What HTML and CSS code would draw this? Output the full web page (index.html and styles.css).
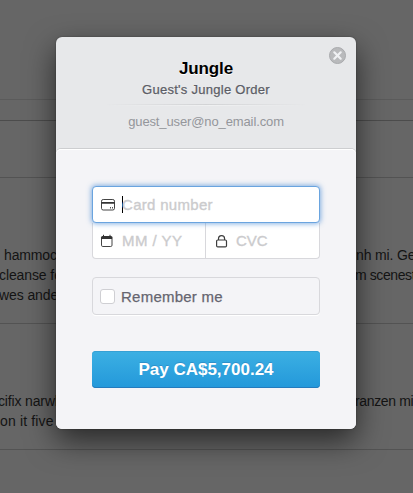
FILE: index.html
```html
<!DOCTYPE html>
<html lang="en">
<head>
<meta charset="utf-8">
<title>Jungle</title>
<link rel="stylesheet" href="styles.css">
</head>
<body>
<main class="page">
  <div class="band band-title"></div>
  <div class="band band-gap"></div>
  <div class="band band-head"></div>
  <section class="band item item-first">
    <div class="line"><span class="l1">hammoc</span><span class="r1">nh mi. Ge</span></div>
    <div class="line"><span class="l2">cleanse fe</span><span class="r2">m scenest</span></div>
    <div class="line"><span class="l2">wes ande</span><span></span></div>
  </section>
  <section class="band item item-second">
    <div class="line"><span class="l4">cifix narwh</span><span class="r4">ranzen mi</span></div>
    <div class="line"><span class="l5">on it five</span><span></span></div>
  </section>
</main>
<div class="overlay">
  <form class="modal">
    <header class="header">
      <button class="close" type="button" aria-label="Close">
        <svg width="17" height="17" viewBox="0 0 17 17"><circle cx="8.5" cy="8.5" r="8" fill="#b9babc" stroke="#a9aaad"/><path d="M5.3 5.3l6.4 6.4M11.7 5.3l-6.4 6.4" stroke="#f0f1f3" stroke-width="2.2" stroke-linecap="round"/></svg>
      </button>
      <h1>Jungle</h1>
      <h2>Guest's Jungle Order</h2>
      <div class="rule"></div>
      <p class="email">guest_user@no_email.com</p>
    </header>
    <div class="body">
      <div class="field card">
        <svg class="icon" width="16" height="14" viewBox="0 0 16 14" fill="none"><rect x=".5" y="1.5" width="13" height="10.5" rx="1.7" stroke="#444"/><path d="M.5 4.9h13" stroke="#333" stroke-width="1.9"/><path d="M9.5 9v1.5M11.5 9v1.5" stroke="#555"/></svg>
        <span class="caret"></span><span class="hint number">Card number</span>
      </div>
      <div class="pair">
        <div class="field">
          <svg class="icon" width="16" height="14" viewBox="0 0 16 14" fill="none"><path d="M1.5 5v6.2q0 1.3 1.3 1.3h7.9q1.3 0 1.3-1.3V5" stroke="#444"/><path d="M1 5V3.5Q1 2 2.5 2H11q1.5 0 1.5 1.5V5z" fill="#333"/><path d="M3.5 .8v2M10 .8v2" stroke="#333"/></svg>
          <span class="hint date">MM / YY</span>
        </div>
        <div class="field cvc">
          <svg class="icon" width="16" height="14" viewBox="0 0 16 14" fill="none"><rect x=".6" y="6" width="9.9" height="6.9" rx="1.2" stroke="#3d3d3d" stroke-width="1.2"/><path d="M2.5 6V4.7a3.05 3.05 0 0 1 6.1 0V6" stroke="#3d3d3d" stroke-width="1.2"/></svg>
          <span class="hint code">CVC</span>
        </div>
      </div>
      <label class="remember"><span class="box"></span><span class="remember-text">Remember me</span></label>
      <button class="pay" type="button"><span>Pay CA$5,700.24</span></button>
    </div>
  </form>
</div>
</body>
</html>
```
FILE: styles.css
```css
* { box-sizing: border-box; margin: 0; padding: 0; }
body {
  width: 413px; height: 493px; overflow: hidden;
  background: #666; color: #141414;
  font-family: "Liberation Sans", Arial, sans-serif;
}
.band { border-bottom: 1px solid #535353; }
.band-title { height: 100px; border-color: #5b5b5b; }
.band-gap { height: 21px; border-color: #4c4c4c; }
.band-head { height: 57px; }
.item-first { height: 146px; padding-top: 67px; }
.item-second { height: 126px; padding-top: 67px; }
.line {
  display: grid; grid-template-columns: 56px 57px; column-gap: 300px;
  height: 20px; line-height: 20px; font-size: 14px; letter-spacing: -.15px; white-space: nowrap;
}
.l1 { padding-left: 4px; }
.l2 { margin-left: -1px; letter-spacing: -.1px; }
.l4 { margin-left: -2px; }
.l5 { letter-spacing: .15px; }
.r2 { margin-left: -1px; letter-spacing: -.4px; }
.r4 { margin-left: -1px; letter-spacing: -.35px; }

.overlay { position: absolute; inset: 0; display: flex; justify-content: center; padding: 37px 1px 0 0; }
.modal {
  width: 300px; height: 392px; border-radius: 6px; overflow: hidden; flex: none;
  background: #e7e8ea;
  box-shadow: 0 12px 30px rgba(0,0,0,.6), 0 0 2px rgba(0,0,0,.35);
}
.header { position: relative; height: 112px; padding-top: 21px; text-align: center; }
.close { position: absolute; top: 10px; right: 10px; width: 17px; height: 17px; border: 0; background: none; }
.close svg { display: block; }
h1 { font-size: 17px; line-height: 21px; letter-spacing: -.1px; color: #000; text-shadow: 0 1px #fff; }
h2 {
  font-size: 13px; line-height: 16px; margin-top: 3px; font-weight: 400; letter-spacing: .27px;
  color: #5c5d66; -webkit-text-stroke: .25px #5c5d66; text-shadow: 0 1px #f3f4f5;
}
.rule {
  width: 200px; height: 2px; margin: 6px auto 0;
  background: linear-gradient(#d2d3d5 50%, #eff0f1 50%);
  -webkit-mask-image: linear-gradient(90deg, transparent, #000 50%, transparent);
  mask-image: linear-gradient(90deg, transparent, #000 50%, transparent);
}
.email { margin-top: 7px; font-size: 13px; line-height: 18px; letter-spacing: -.12px; color: #94969b; }
.body {
  height: 280px; padding: 37px 36px 0; background: #f4f4f7;
  border-radius: 5px 5px 0 0; box-shadow: 0 -1px #cdced0, inset 0 1px #fff;
}
.field { display: flex; align-items: center; height: 36px; padding-left: 8px; }
.icon { flex: none; width: 16px; }
.card {
  position: relative; height: 37px; background: #fff; border: 1px solid #6aa4df;
  border-radius: 4px; padding-left: 8px; box-shadow: 0 0 5px 1px rgba(88,148,216,.7);
}
.caret { width: 1px; height: 17px; margin-left: 5px; background: #000; }
.hint { font-size: 15px; color: #cbcbcd; -webkit-text-stroke: .35px #cbcbcd; white-space: pre; }
.number { margin-left: -1px; letter-spacing: .3px; }
.pair {
  display: grid; grid-template-columns: 112px 1fr; height: 36px;
  background: #fff; border: 1px solid #d8d8dc; border-top: 0; border-radius: 0 0 4px 4px;
}
.pair .field { padding-left: 7px; height: 35px; }
.cvc { border-left: 1px solid #d8d8dc; }
.pair .cvc { padding-left: 10px; }
.date { margin-left: 6px; letter-spacing: .45px; }
.code { margin-left: 4px; }
.remember {
  display: flex; align-items: center; height: 38px; margin-top: 18px; padding-left: 7px;
  border: 1px solid #d8d8dc; border-radius: 4px; box-shadow: 0 1px #fff;
}
.box { width: 15px; height: 15px; background: #fff; border: 1px solid #cfcfd3; border-radius: 3px; }
.remember-text { margin-left: 6px; font-size: 15px; letter-spacing: .24px; color: #65656f; -webkit-text-stroke: .25px #65656f; }
.pay {
  display: block; width: 228px; height: 37px; margin-top: 36px; border: 0; border-radius: 4px;
  background: linear-gradient(#3cb0e3, #2398da);
  box-shadow: inset 0 1px #36a0d4, inset 0 -1px #247bbd;
  color: #fff; font: bold 17px/37px "Liberation Sans", Arial, sans-serif;
  text-shadow: 0 -1px rgba(30,100,160,.35);
}
```
